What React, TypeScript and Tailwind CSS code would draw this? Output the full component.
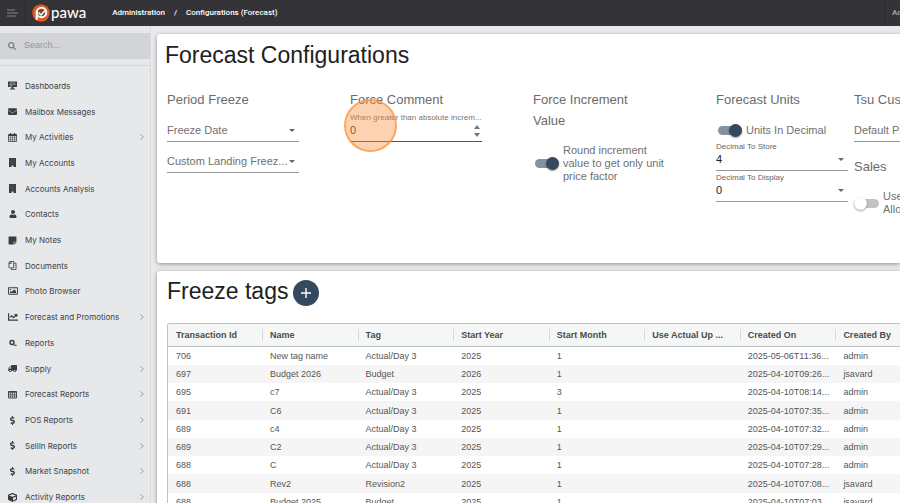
import React, { useState } from "react";
import {
  FaChartLine,
  FaCube,
  FaDollarSign,
  FaEnvelope,
  FaRegCopy,
  FaRegImage,
  FaSearch,
  FaStickyNote,
  FaTruck,
  FaUser,
} from "react-icons/fa";

function BoardIcon() {
  return (
    <svg viewBox="0 0 18 18" className="h-[9px] w-[9px]" fill="currentColor">
      <path d="M0 1h18v11H0z" />
      <path d="M3 4h12M3 7h5M10 7h5M3 9.500h7" stroke="#e6e8ea" strokeWidth="1" />
      <path d="M7 12h4v3h3v2H4v-2h3z" />
    </svg>
  );
}

function BuildingIcon() {
  return (
    <svg viewBox="0 0 18 18" className="h-[9px] w-[9px]" fill="currentColor">
      <path d="M2 0h14v18h-5v-3H7v3H2z" />
      <path d="M5 3.500h8M5 7h8M5 10.500h8" stroke="#85888c" strokeWidth="1.200" strokeDasharray="1.400 1.900" />
    </svg>
  );
}

function CalendarIcon() {
  return (
    <svg viewBox="0 0 18 18" className="h-[9px] w-[9px]" fill="none" stroke="currentColor">
      <path d="M1 3h16v14H1z" strokeWidth="1.500" />
      <path d="M1 4.500h16" strokeWidth="3.500" />
      <path d="M5 0v5M13 0v5" strokeWidth="2.500" />
      <path d="M5 6v11M9 6v11M13 6v11M1 9.500h16M1 13.500h16" strokeWidth="1" />
    </svg>
  );
}

function GridIcon() {
  return (
    <svg viewBox="0 0 18 18" className="h-[9px] w-[9px]" fill="none" stroke="currentColor">
      <path d="M1 3h16v13H1z" strokeWidth="1.800" />
      <path d="M1 4h16" strokeWidth="2.500" />
      <path d="M5 3v13M9 3v13M13 3v13M1 8.500h16M1 12h16" strokeWidth="1.300" />
    </svg>
  );
}

function LensIcon() {
  return (
    <svg viewBox="0 0 18 18" className="h-[9px] w-[9px]" fill="none" stroke="currentColor">
      <circle cx="8" cy="9" r="4" strokeWidth="2.800" />
      <path d="M10 12l3 3M14 14.500h3" strokeWidth="2.500" />
    </svg>
  );
}

const ic = "h-[9px] w-[9px]";

const menu: { label: string; icon: React.ReactNode; group?: boolean }[] = [
  { label: "Dashboards", icon: <BoardIcon /> },
  { label: "Mailbox Messages", icon: <FaEnvelope className={ic} /> },
  { label: "My Activities", icon: <CalendarIcon />, group: true },
  { label: "My Accounts", icon: <BuildingIcon /> },
  { label: "Accounts Analysis", icon: <BuildingIcon /> },
  { label: "Contacts", icon: <FaUser className="h-2 w-2" /> },
  { label: "My Notes", icon: <FaStickyNote className="h-[9px] w-[9px]" /> },
  { label: "Documents", icon: <FaRegCopy className="h-[9px] w-[9px] -scale-x-100" /> },
  { label: "Photo Browser", icon: <FaRegImage className="h-[10px] w-[10px]" /> },
  { label: "Forecast and Promotions", icon: <FaChartLine className="h-[10px] w-[10px]" />, group: true },
  { label: "Reports", icon: <LensIcon /> },
  { label: "Supply", icon: <FaTruck className="h-[9px] w-[9px] -scale-x-100" />, group: true },
  { label: "Forecast Reports", icon: <GridIcon />, group: true },
  { label: "POS Reports", icon: <FaDollarSign className={ic} />, group: true },
  { label: "SellIn Reports", icon: <FaDollarSign className={ic} />, group: true },
  { label: "Market Snapshot", icon: <FaDollarSign className={ic} />, group: true },
  { label: "Activity Reports", icon: <FaCube className={ic} />, group: true },
];

const columns = [
  "Transaction Id",
  "Name",
  "Tag",
  "Start Year",
  "Start Month",
  "Use Actual Up ...",
  "Created On",
  "Created By",
];

const rows = [
  ["706", "New tag name", "Actual/Day 3", "2025", "1", "", "2025-05-06T11:36...", "admin"],
  ["697", "Budget 2026", "Budget", "2026", "1", "", "2025-04-10T09:26...", "jsavard"],
  ["695", "c7", "Actual/Day 3", "2025", "3", "", "2025-04-10T08:14...", "admin"],
  ["691", "C6", "Actual/Day 3", "2025", "1", "", "2025-04-10T07:35...", "admin"],
  ["689", "c4", "Actual/Day 3", "2025", "1", "", "2025-04-10T07:32...", "admin"],
  ["689", "C2", "Actual/Day 3", "2025", "1", "", "2025-04-10T07:29...", "admin"],
  ["688", "C", "Actual/Day 3", "2025", "1", "", "2025-04-10T07:28...", "admin"],
  ["688", "Rev2", "Revision2", "2025", "1", "", "2025-04-10T07:08...", "jsavard"],
  ["688", "Budget 2025", "Budget", "2025", "1", "", "2025-04-10T07:03...", "jsavard"],
];

function Chevron() {
  return (
    <svg viewBox="0 0 4 6" className="h-[6px] w-1" fill="none" stroke="#8f9296" strokeWidth="0.900">
      <path d="M0.500 0.500L3.300 3L0.500 5.500" />
    </svg>
  );
}

function Logo() {
  return (
    <a href="#home" className="flex items-center gap-px pl-[6px] text-white">
      <svg viewBox="0 0 36 36" className="h-[18px] w-[18px]">
        <circle cx="18" cy="18" r="17.500" fill="#e2571c" />
        <circle cx="19" cy="17" r="10" fill="#7a4a33" />
        <circle cx="19" cy="17" r="9.500" fill="none" stroke="#fff" strokeWidth="4" />
        <path d="M9.500 15v15" stroke="#fff" strokeWidth="4" strokeLinecap="round" />
        <path d="M13 17l5 5l8-9" fill="none" stroke="#fff" strokeWidth="3" />
      </svg>
      <span className="pb-[3px] font-['Lato',sans-serif] text-[15px] leading-[18px]">pawa</span>
    </a>
  );
}

function SelectField({ id, label, value, floating }: { id: string; label: string; value: string; floating?: boolean }) {
  return (
    <div className="relative flex h-[31px] w-[132px] flex-col justify-end border-b border-[#949494]">
      {floating && (
        <label htmlFor={id} className="text-[8px] leading-[10px] text-[#666]">
          {label}
        </label>
      )}
      <select
        id={id}
        aria-label={floating ? undefined : label}
        className={
          floating
            ? "mb-1 h-[14px] w-full appearance-none bg-transparent text-[11px] leading-[14px] text-[#222] outline-none"
            : "mb-1 h-[14px] w-full appearance-none bg-transparent text-[11px] leading-[14px] text-[#707070] outline-none"
        }
      >
        <option>{value}</option>
      </select>
      <svg viewBox="0 0 6 3" className="pointer-events-none absolute right-1 bottom-[9px] h-[3px] w-[6px]" fill="#666">
        <path d="M0 0h6L3 3z" />
      </svg>
    </div>
  );
}

function Toggle({ id, initial, children }: { id: string; initial: boolean; children: React.ReactNode }) {
  const [on, setOn] = useState(initial);
  return (
    <label htmlFor={id} className="relative flex items-center gap-1 text-[11px] leading-[13px] text-[#707070]">
      <input id={id} type="checkbox" role="switch" checked={on} onChange={() => setOn(!on)} className="sr-only" />
      <span
        className={
          on
            ? "ml-[2px] flex h-[9px] w-[24px] shrink-0 items-center justify-end rounded-full bg-[#8592a0]"
            : "flex h-[9px] w-[25px] shrink-0 items-center rounded-full bg-[#c3c3c3]"
        }
      >
        <span
          className={
            on
              ? "size-[13px] shrink-0 rounded-full bg-[#34495e] shadow-[0_1px_2px_rgba(0,0,0,0.4)]"
              : "size-[13px] shrink-0 rounded-full bg-white shadow-[0_1px_2px_rgba(0,0,0,0.4)]"
          }
        />
      </span>
      <span>{children}</span>
    </label>
  );
}

function Heading({ children }: { children: React.ReactNode }) {
  return <h2 className="pb-px text-[13px] leading-[21px] text-[#6b6b6b]">{children}</h2>;
}

export default function App() {
  const [amount, setAmount] = useState("0");
  return (
    <div className="flex h-screen flex-col overflow-hidden bg-[#e8eaec] font-['Liberation_Sans',Arial,sans-serif]">
      <header className="flex h-[26px] shrink-0 items-stretch bg-[#333338] font-['Roboto',sans-serif] text-[8px] font-medium text-white">
        <button aria-label="Toggle menu" className="flex w-[26px] items-center justify-center border-r border-[#2a2a2e]">
          <svg viewBox="0 0 11 8" className="h-2 w-[11px]" stroke="#85858a" strokeWidth="1">
            <path d="M0 1h8M0 4h11M0 7h9" />
          </svg>
        </button>
        <Logo />
        <nav className="flex flex-1 items-center gap-[9px] pl-[26px]" aria-label="Breadcrumb">
          <a href="#administration">Administration</a>
          <span>/</span>
          <a href="#configurations">Configurations (Forecast)</a>
        </nav>
        <button className="w-[16px] shrink-0 overflow-hidden border-l border-[#29292c] pl-[7px] text-left whitespace-nowrap text-[#b0b0b4]">
          Admin
        </button>
      </header>

      <div className="flex min-h-0 flex-1">
        <aside className="w-[151px] shrink-0 overflow-hidden border-r border-[#d8dadc] bg-[#e6e8ea] pt-[7px]">
          <div className="flex h-[26px] items-center bg-[#d3d4d8] pl-2">
            <FaSearch className="size-2 text-[#7c7e82]" />
            <input
              type="search"
              aria-label="Search"
              placeholder="Search..."
              className="ml-2 w-[110px] bg-transparent text-[9px] text-[#555] outline-none placeholder:text-[#929498]"
            />
          </div>
          <ul className="mt-[6px] grid h-[445px] auto-rows-fr border-t border-[#d6d8da] pt-[7px]">
            {menu.map((m) => (
              <li key={m.label}>
                <a href="#menu" className="flex h-full items-center pr-[6px] font-['Inter',sans-serif] text-[8px] text-[#3f4145]">
                  <span className="flex w-[25px] justify-center text-[#3a3c40]">{m.icon}</span>
                  <span className="flex-1">{m.label}</span>
                  {m.group && <Chevron />}
                </a>
              </li>
            ))}
          </ul>
        </aside>

        <main className="flex min-w-0 flex-1 flex-col gap-2 overflow-hidden pt-2 pl-[6px]">
          <section className="h-[229px] shrink-0 rounded-l-[3px] bg-white shadow-[0_1px_4px_rgba(0,0,0,0.4)]">
            <h1 className="pt-[8px] pl-2 text-[23px] leading-[26px] text-[#212121]">Forecast Configurations</h1>
            <div className="mt-[21px] grid grid-cols-[183px_183px_183px_138px_183px] pl-[10px]">
              <div>
                <Heading>Period Freeze</Heading>
                <SelectField id="freeze-date" label="Freeze Date" value="Freeze Date" />
                <SelectField id="landing" label="Custom Landing Freeze" value="Custom Landing Freez..." />
              </div>

              <div>
                <Heading>Force Comment</Heading>
                <div className="relative flex h-[31px] w-[132px] flex-col justify-end border-b border-[#555]">
                  <label htmlFor="increment" className="text-[8px] leading-[10px] whitespace-nowrap text-[#777]">
                    When greater than absolute increm...
                  </label>
                  <input
                    id="increment"
                    type="number"
                    value={amount}
                    onChange={(e) => setAmount(e.target.value)}
                    className="mb-1 h-[14px] w-full appearance-none bg-transparent text-[11px] leading-[14px] text-[#333] outline-none [-moz-appearance:textfield] [&::-webkit-inner-spin-button]:appearance-none"
                  />
                  <svg viewBox="0 0 6 12" className="pointer-events-none absolute right-[2px] bottom-1 h-3 w-[6px]" fill="#757575">
                    <path d="M0 4L3 0L6 4zM0 8h6L3 12z" />
                  </svg>
                  <span className="pointer-events-none absolute -top-3 -left-[6px] size-[53px] rounded-full border-2 border-[#f5963f]/70 bg-[#f98f3c]/40" />
                </div>
              </div>

              <div className="w-[132px]">
                <Heading>
                  Force Increment
                  <br />
                  Value
                </Heading>
                <div className="pt-3">
                  <Toggle id="round" initial>
                    Round increment
                    <br />
                    value to get only unit
                    <br />
                    price factor
                  </Toggle>
                </div>
              </div>

              <div>
                <Heading>Forecast Units</Heading>
                <div className="h-[29px] pt-[13px]">
                  <Toggle id="decimal" initial>
                    Units In Decimal
                  </Toggle>
                </div>
                <SelectField id="store" label="Decimal To Store" value="4" floating />
                <SelectField id="display" label="Decimal To Display" value="0" floating />
              </div>

              <div>
                <Heading>Tsu Customer</Heading>
                <SelectField id="default-price" label="Default Price" value="Default Price" />
                <div className="pt-[14px]">
                  <Heading>Sales</Heading>
                </div>
                <div className="pt-3">
                  <Toggle id="sales" initial={false}>
                    Use Sales
                    <br />
                    Allocation
                  </Toggle>
                </div>
              </div>
            </div>
          </section>

          <section className="flex-1 rounded-tl-[3px] bg-white pt-2 pl-[10px] shadow-[0_1px_4px_rgba(0,0,0,0.4)]">
            <div className="flex items-center gap-[5px]">
              <h1 className="pb-1 text-[23px] leading-[24px] text-[#212121]">Freeze tags</h1>
              <button aria-label="Add tag" className="flex size-[26px] items-center justify-center rounded-full bg-[#34495e]">
                <svg viewBox="0 0 10 10" className="size-[10px]" stroke="#fff" strokeWidth="1.400">
                  <path d="M5 0v10M0 5h10" />
                </svg>
              </button>
            </div>
            <div className="mt-4 overflow-hidden rounded-tl-[3px] border-t border-l border-[#bdc3c7]">
              <table className="h-[187px] w-[763px] table-fixed border-collapse text-left text-[9px] leading-[12px] text-[#555]">
                <colgroup>
                  <col className="w-[94px]" />
                </colgroup>
                <thead className="border-b border-[#bdc3c7] bg-[#f5f7f7] text-[#4a4a4a]">
                  <tr className="h-[22px]">
                    {columns.map((c, i) => (
                      <th key={c} scope="col" className="p-0 font-bold">
                        <div className={i ? "border-l border-[#d5d9db] pl-[7px] whitespace-nowrap" : "pl-2 whitespace-nowrap"}>{c}</div>
                      </th>
                    ))}
                  </tr>
                </thead>
                <tbody>
                  {rows.map((r, n) => (
                    <tr key={n} className="even:bg-[#f5f5f5]">
                      {r.map((v, i) => (
                        <td key={i} className="p-0 pl-2 whitespace-nowrap">
                          {v}
                        </td>
                      ))}
                    </tr>
                  ))}
                </tbody>
              </table>
            </div>
          </section>
        </main>
      </div>
    </div>
  );
}
